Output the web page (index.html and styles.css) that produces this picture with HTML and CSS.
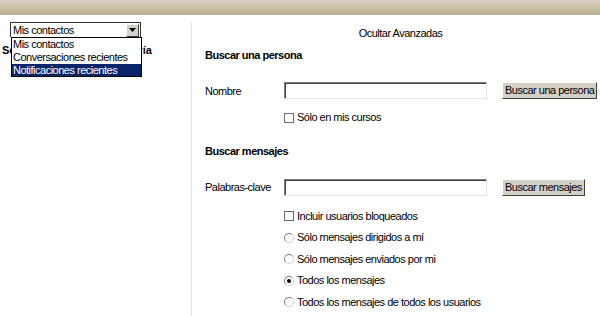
FILE: index.html
```html
<!DOCTYPE html>
<html lang="es">
<head>
<meta charset="utf-8">
<link rel="stylesheet" href="styles.css">
</head>
<body>
<div class="topbar"></div>
<div class="page">
  <div class="side">
    <div class="selectwrap">
      <div class="select">
        <span class="select-value">Mis contactos</span>
        <span class="select-arrow"><svg width="7" height="4" viewBox="0 0 7 4"><path d="M0 0H7L3.5 4Z" fill="#000"/></svg></span>
      </div>
      <ul class="select-list">
        <li>Mis contactos</li>
        <li>Conversaciones recientes</li>
        <li class="active">Notificaciones recientes</li>
      </ul>
    </div>
    <div class="side-title">Servicios web de mensajería</div>
  </div>
  <div class="main">
    <div class="toggle">Ocultar Avanzadas</div>
    <h3 class="heading">Buscar una persona</h3>
    <div class="formrow">
      <span class="label">Nombre</span>
      <span class="field"></span>
      <span class="btn">Buscar una persona</span>
    </div>
    <div class="opts">
      <div class="opt"><span class="check"></span>Sólo en mis cursos</div>
    </div>
    <h3 class="heading heading2">Buscar mensajes</h3>
    <div class="formrow formrow2">
      <span class="label">Palabras-clave</span>
      <span class="field"></span>
      <span class="btn">Buscar mensajes</span>
    </div>
    <div class="opts opts2">
      <div class="opt"><span class="check"></span>Incluir usuarios bloqueados</div>
      <div class="opt"><span class="radio"></span>Sólo mensajes dirigidos a mí</div>
      <div class="opt"><span class="radio"></span>Sólo mensajes enviados por mi</div>
      <div class="opt"><span class="radio checked"></span>Todos los mensajes</div>
      <div class="opt"><span class="radio"></span>Todos los mensajes de todos los usuarios</div>
    </div>
  </div>
</div>
</body>
</html>
```
FILE: styles.css
```css
html, body {
  margin: 0;
  padding: 0;
  background: #fff;
}
body {
  font-family: "Liberation Sans", Arial, sans-serif;
  font-size: 11px;
  letter-spacing: -0.5px;
  color: #000;
  width: 600px;
  height: 316px;
  overflow: hidden;
}
.topbar {
  height: 15px;
  background: linear-gradient(#d9d2c2, #b9ae93);
}
.page {
  display: flex;
  height: 301px;
}
.side {
  flex: 0 0 191px;
  border-right: 1px solid #e2e2e2;
  margin-top: 7px;
  position: relative;
}
.selectwrap {
  position: relative;
  margin-left: 10px;
  width: 131px;
}
.select {
  height: 15px;
  box-sizing: border-box;
  border: 1px solid #333;
  border-bottom: 0;
  display: flex;
  align-items: center;
  justify-content: space-between;
  padding-left: 2px;
  background: #fff;
}
.select-value {
  line-height: 13px;
}
.select-arrow {
  width: 11px;
  height: 11px;
  margin-right: 1px;
  background: #d4d0c8;
  border: 1px solid;
  border-color: #fff #404040 #404040 #fff;
  display: flex;
  align-items: center;
  justify-content: center;
}
.select-list {
  position: absolute;
  left: 1px;
  top: 15px;
  width: 131px;
  box-sizing: border-box;
  margin: 0;
  padding: 0;
  list-style: none;
  background: #fff;
  border: 1px solid #000;
  z-index: 2;
}
.select-list li {
  height: 12px;
  line-height: 12px;
  padding-left: 1px;
  white-space: nowrap;
}
.select-list li + li {
  margin-top: 1px;
}
.select-list li.active {
  background: #0a246a;
  color: #fff;
}
.side-title {
  font-weight: bold;
  letter-spacing: 0;
  margin: 7px 0 0 2px;
  white-space: nowrap;
}
.main {
  flex: 1;
  min-width: 0;
  padding-left: 13px;
  padding-top: 12px;
}
.toggle {
  text-align: center;
  line-height: 13px;
  padding-right: 4px;
}
.heading {
  font-size: 11px;
  font-weight: bold;
  margin: 9px 0 0 0;
  line-height: 13px;
}
.heading2 {
  margin-top: 16px;
}
.formrow {
  display: flex;
  align-items: center;
  margin-top: 20px;
  height: 17px;
}
.formrow2 {
  margin-top: 21px;
}
.label {
  flex: 0 0 79px;
}
.field {
  flex: 0 0 203px;
  height: 17px;
  box-sizing: border-box;
  border: 1px solid;
  border-color: #7f7f7f #e6e6e6 #e6e6e6 #7f7f7f;
  box-shadow: inset 1px 1px 0 #404040;
  background: #fff;
}
.btn {
  margin-left: 15px;
  height: 17px;
  box-sizing: border-box;
  background: #d4d0c8;
  border: 1px solid;
  border-color: #fff #404040 #404040 #fff;
  padding: 0 2px;
  line-height: 15px;
  white-space: nowrap;
}
.opts {
  padding-left: 79px;
  margin-top: 8px;
}
.opts2 {
  margin-top: 10px;
}
.opt {
  display: flex;
  align-items: center;
  height: 21.5px;
  line-height: 13px;
}
.check {
  width: 10px;
  height: 10px;
  box-sizing: border-box;
  border: 1px solid #6b6b6b;
  background: #fff;
  margin-right: 3px;
}
.radio {
  width: 10px;
  height: 10px;
  box-sizing: border-box;
  border: 1px solid;
  border-color: #808080 #d4d0c8 #d4d0c8 #808080;
  border-radius: 50%;
  background: #fff;
  margin-right: 3px;
  display: flex;
  align-items: center;
  justify-content: center;
}
.radio.checked::after {
  content: "";
  width: 4px;
  height: 4px;
  border-radius: 50%;
  background: #000;
}
```
